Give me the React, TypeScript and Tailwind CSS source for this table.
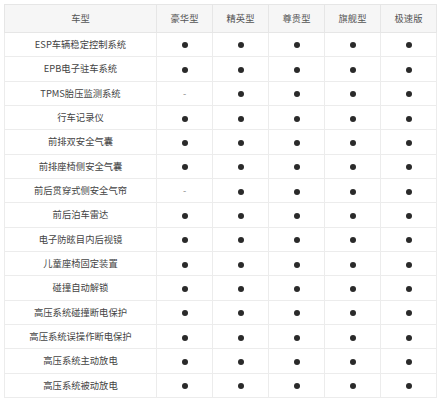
import React from "react";

const rows: [string, string[]][] = [
  ["ESP车辆稳定控制系统", ["d", "d", "d", "d", "d"]],
  ["EPB电子驻车系统", ["d", "d", "d", "d", "d"]],
  ["TPMS胎压监测系统", ["-", "d", "d", "d", "d"]],
  ["行车记录仪", ["d", "d", "d", "d", "d"]],
  ["前排双安全气囊", ["d", "d", "d", "d", "d"]],
  ["前排座椅侧安全气囊", ["d", "d", "d", "d", "d"]],
  ["前后贯穿式侧安全气帘", ["-", "d", "d", "d", "d"]],
  ["前后泊车雷达", ["d", "d", "d", "d", "d"]],
  ["电子防眩目内后视镜", ["d", "d", "d", "d", "d"]],
  ["儿童座椅固定装置", ["d", "d", "d", "d", "d"]],
  ["碰撞自动解锁", ["d", "d", "d", "d", "d"]],
  ["高压系统碰撞断电保护", ["d", "d", "d", "d", "d"]],
  ["高压系统误操作断电保护", ["d", "d", "d", "d", "d"]],
  ["高压系统主动放电", ["d", "d", "d", "d", "d"]],
  ["高压系统被动放电", ["d", "d", "d", "d", "d"]],
];

const heads = ["豪华型", "精英型", "尊贵型", "旗舰型", "极速版"];

export default function App() {
  return (
    <div
      className="w-[441px] h-[400px] bg-white pl-[4px] pt-[4px] text-[#444]"
      style={{ fontFamily: '"Noto Sans CJK SC", "Noto Sans", sans-serif' }}
    >
      <table className="border-collapse text-[9.3px] leading-none">
        <thead>
          <tr className="h-[28px] bg-[#f6f6f6]">
            <th className="w-[152px] border border-[#e6e6e6] font-normal text-[#555] text-center">车型</th>
            {heads.map((h) => (
              <th key={h} className="w-[56px] border border-[#e6e6e6] font-normal text-[#555] text-center">
                {h}
              </th>
            ))}
          </tr>
        </thead>
        <tbody>
          {rows.map(([name, vals]) => (
            <tr key={name} className="h-[24.35px]">
              <td className="border border-[#ececec] text-center">{name}</td>
              {vals.map((v, i) => (
                <td key={i} className="border border-[#ececec] text-center">
                  {v === "d" ? (
                    <span className="inline-block w-[6px] h-[6px] rounded-full bg-[#2a2a2a] align-middle" />
                  ) : (
                    <span className="text-[#888]">-</span>
                  )}
                </td>
              ))}
            </tr>
          ))}
        </tbody>
      </table>
    </div>
  );
}
